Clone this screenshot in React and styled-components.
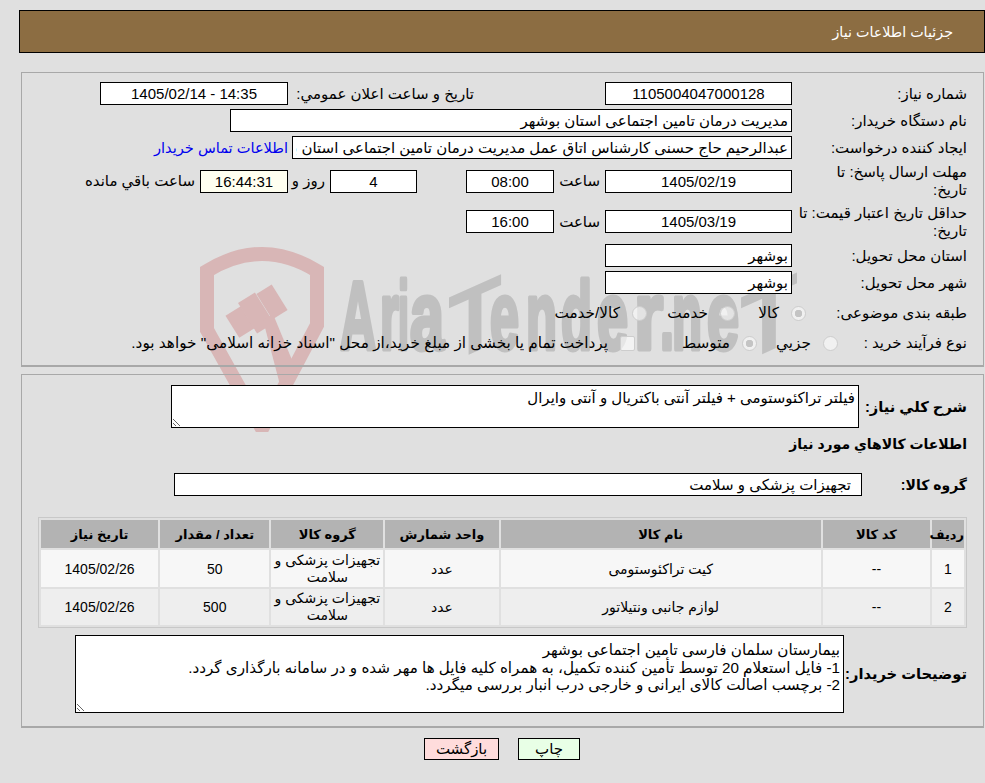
import React from "react";
import styled, { createGlobalStyle } from "styled-components";

const GlobalStyle = createGlobalStyle`
  html, body {
    margin: 0;
    padding: 0;
    background: #e0e0e0;
  }
  body {
    font-family: "Liberation Sans", "DejaVu Sans", sans-serif;
    font-size: 15px;
    color: #000;
  }
`;

const ITEMS = [
  { id: 1, code: "--", name: "کیت تراکئوستومی", unit: "عدد", group: "تجهیزات پزشکی و سلامت", qty: "50", date: "1405/02/26", height: 37 },
  { id: 2, code: "--", name: "لوازم جانبی ونتیلاتور", unit: "عدد", group: "تجهیزات پزشکی و سلامت", qty: "500", date: "1405/02/26", height: 36 },
];

const COLUMNS = [
  { title: "ردیف", width: 32 },
  { title: "کد کالا", width: 107 },
  { title: "نام کالا", width: 320 },
  { title: "واحد شمارش", width: 113 },
  { title: "گروه کالا", width: 112 },
  { title: "تعداد / مقدار", width: 109 },
  { title: "تاریخ نیاز", width: 117 },
];

const DESCRIPTION = `بیمارستان سلمان فارسی تامین اجتماعی بوشهر
1- فایل استعلام 20 توسط تأمین کننده تکمیل، به همراه کلیه فایل ها مهر شده و در سامانه بارگذاری گردد.
2- برچسب اصالت کالای ایرانی و خارجی درب انبار بررسی میگردد.`;

// the logo's letters are set one by one, the two T's lean upward
const LOGO_LETTERS = [
  { char: "A", x: 140, width: 36 },
  { char: "r", x: 180, width: 19 },
  { char: "i", x: 198, width: 11 },
  { char: "a", x: 210, width: 34 },
  { char: "T", x: 248, width: 54, lean: true },
  { char: "e", x: 290, width: 29 },
  { char: "n", x: 326, width: 31 },
  { char: "d", x: 361, width: 31 },
  { char: "e", x: 397, width: 31 },
  { char: "r", x: 434, width: 29 },
  { char: ".", x: 460, width: 14 },
  { char: "n", x: 472, width: 30 },
  { char: "e", x: 507, width: 32 },
  { char: "T", x: 540, width: 58, lean: true },
];

function Watermark() {
  return (
    <S.Watermark viewBox="0 0 640 190" width="640" height="190" aria-hidden="true">
      <path
        d="M7 26 Q62 -8 117 26 L117 80 L64 180 L60 180 L7 85 Z"
        fill="none"
        stroke="#d8b6b6"
        strokeWidth="14"
      />
      <g fill="#d8b6b6">
        <rect x="-9" y="-13" width="18" height="26" transform="translate(40 77) rotate(-32)" />
        <rect x="-10" y="-18" width="20" height="36" transform="translate(56 68) rotate(-32)" />
        <rect x="-9" y="-15" width="18" height="30" transform="translate(72 57) rotate(-32)" />
        <path d="M63 75 L73 69 L97 127 L80 140 Z" />
      </g>
      <g
        fill="#c0c0c0"
        stroke="#c0c0c0"
        strokeLinejoin="round"
        fontFamily="'Liberation Sans', sans-serif"
        fontWeight="700"
        fontSize="96"
        direction="ltr"
      >
        {LOGO_LETTERS.map((letter) => (
          <text
            key={letter.x}
            strokeWidth={letter.lean ? 0 : 5}
            transform={
              letter.lean
                ? `translate(${letter.x} 119) skewY(-24)`
                : `translate(${letter.x} 104)`
            }
            textLength={letter.width}
            lengthAdjust="spacingAndGlyphs"
          >
            {letter.char}
          </text>
        ))}
      </g>
    </S.Watermark>
  );
}

function Row({ height, labelWidth = 175, label, bold, size, children }) {
  return (
    <S.Row $height={height}>
      <S.Label $width={labelWidth} $bold={bold} $size={size}>{label}</S.Label>
      {children}
    </S.Row>
  );
}

function Option({ width, type = "radio", name, checked, children }) {
  return (
    <S.Option $width={width}>
      {type === "radio" ? <S.Radio name={name} defaultChecked={checked} /> : <S.Check />}
      <span>{children}</span>
    </S.Option>
  );
}

export default function App() {
  return (
    <S.Page>
      <GlobalStyle />
      <Watermark />

      <S.Header>جزئیات اطلاعات نیاز</S.Header>

      <S.Panel $top={19} $pad={7} $bottom={9}>
        <Row height={27} label="شماره نیاز:">
          <S.Field $width={187} readOnly value="1105004047000128" />
          <S.Caption $width={317} $inset={131}>تاریخ و ساعت اعلان عمومي:</S.Caption>
          <S.Field $width={188} readOnly value="14:35 - 1405/02/14" />
        </Row>
        <Row height={27} label="نام دستگاه خریدار:">
          <S.Field $width={562} $start readOnly value="مدیریت درمان تامین اجتماعی استان بوشهر" />
        </Row>
        <Row height={27} label="ایجاد کننده درخواست:">
          <S.Field $width={500} $start readOnly value="عبدالرحیم حاج حسنی کارشناس اتاق عمل مدیریت درمان تامین اجتماعی استان بوشهر" />
          <S.ContactLink href="#">اطلاعات تماس خریدار</S.ContactLink>
        </Row>
        <Row height={40} label={<>مهلت ارسال پاسخ: تا<br />تاریخ:</>}>
          <S.Field $width={187} readOnly value="1405/02/19" />
          <S.Caption $width={51} $inset={5}>ساعت</S.Caption>
          <S.Field $width={88} readOnly value="08:00" />
          <S.Caption $width={49} />
          <S.Field $width={87} readOnly value="4" />
          <S.Caption $width={42} $inset={5}>روز و</S.Caption>
          <S.Field $width={88} $tint readOnly value="16:44:31" />
          <S.Caption $inset={5}>ساعت باقي مانده</S.Caption>
        </Row>
        <Row height={41} label="حداقل تاریخ اعتبار قیمت: تا تاریخ:">
          <S.Field $width={187} readOnly value="1405/03/19" />
          <S.Caption $width={51} $inset={5}>ساعت</S.Caption>
          <S.Field $width={88} readOnly value="16:00" />
        </Row>
        <Row height={27} label="استان محل تحویل:">
          <S.Field $width={187} $start readOnly value="بوشهر" />
        </Row>
        <Row height={27} label="شهر محل تحویل:">
          <S.Field $width={187} $start readOnly value="بوشهر" />
        </Row>
        <Row height={34} labelWidth={161} label="طبقه بندی موضوعی:">
          <Option width={71} name="subject" checked>کالا</Option>
          <Option width={88} name="subject">خدمت</Option>
          <Option name="subject">کالا/خدمت</Option>
        </Row>
        <Row height={26} labelWidth={129} label="نوع فرآیند خرید :">
          <Option width={81} name="process">جزیي</Option>
          <Option width={122} name="process" checked>متوسط</Option>
          <Option type="check">پرداخت تمام یا بخشی از مبلغ خرید،از محل "اسناد خزانه اسلامی" خواهد بود.</Option>
        </Row>
      </S.Panel>

      <S.Panel $top={7} $pad={9} $bottom={13}>
        <Row height={45} labelWidth={108} bold size={14.7} label="شرح کلي نیاز:">
          <S.Notes $width={688} $height={43} $padTop={3} readOnly value="فیلتر تراکئوستومی + فیلتر آنتی باکتریال و آنتی وایرال" />
        </Row>
        <S.SectionTitle>اطلاعات کالاهاي مورد نیاز</S.SectionTitle>
        <Row height={25} labelWidth={105} bold label="گروه کالا:">
          <S.Field $width={688} $start $pad={10} readOnly value="تجهیزات پزشکی و سلامت" />
        </Row>

        <S.Table>
          <thead>
            <tr>
              {COLUMNS.map((col) => (
                <S.Th key={col.title} $width={col.width}>{col.title}</S.Th>
              ))}
            </tr>
          </thead>
          <tbody>
            {ITEMS.map((item) => (
              <S.Tr key={item.id} $even={item.id % 2 === 0} $height={item.height}>
                <td>{item.id}</td>
                <td>{item.code}</td>
                <td>{item.name}</td>
                <td>{item.unit}</td>
                <S.GroupCell>{item.group}</S.GroupCell>
                <td>{item.qty}</td>
                <td>{item.date}</td>
              </S.Tr>
            ))}
          </tbody>
        </S.Table>

        <S.DescriptionRow>
          <S.Label $width={123} $bold $size={14.7}>توضیحات خریدار:</S.Label>
          <S.Notes $width={769} $height={78} $padTop={5} $size={15.2} readOnly value={DESCRIPTION} />
        </S.DescriptionRow>
      </S.Panel>

      <S.Actions>
        <S.Button $bg="#e8ffe6" $width={62}>چاپ</S.Button>
        <S.Button $bg="#ffdcdc" $width={75}>بازگشت</S.Button>
      </S.Actions>
    </S.Page>
  );
}

const S = {
  Page: styled.div`
    position: relative;
    width: 985px;
    height: 783px;
    box-sizing: border-box;
    padding: 10px 0 0 19px;
    direction: rtl;
    overflow: hidden;
    background: #e0e0e0;
  `,
  Watermark: styled.svg`
    position: absolute;
    left: 200px;
    top: 245px;
    overflow: visible;
  `,
  Header: styled.div`
    position: relative;
    height: 43px;
    box-sizing: border-box;
    display: flex;
    align-items: center;
    padding-right: 31px;
    border: 1px solid #000;
    background: #8c6d42;
    color: #fff;
    font-size: 14.3px;
  `,
  Panel: styled.section`
    position: relative;
    margin: ${({ $top }) => $top}px 1px 0 2px;
    padding: ${({ $pad }) => $pad}px 16px ${({ $bottom }) => $bottom}px;
    border: 1px solid #a8a8a8;
    border-bottom-width: 2px;
  `,
  Row: styled.div`
    display: flex;
    align-items: center;
    height: ${({ $height }) => $height}px;
  `,
  Label: styled.div`
    flex: none;
    box-sizing: border-box;
    width: ${({ $width }) => $width}px;
    line-height: 18px;
    font-size: ${({ $bold, $size }) => $size || ($bold ? 14 : 15)}px;
    font-weight: ${({ $bold }) => ($bold ? 700 : 400)};
    white-space: ${({ $bold }) => ($bold ? "nowrap" : "normal")};
  `,
  Caption: styled.div`
    flex: none;
    box-sizing: border-box;
    width: ${({ $width }) => ($width ? `${$width}px` : "auto")};
    padding-right: ${({ $inset }) => $inset || 0}px;
    white-space: nowrap;
  `,
  Field: styled.input`
    flex: none;
    box-sizing: border-box;
    width: ${({ $width }) => $width}px;
    height: 23px;
    margin: 0;
    padding: 0 ${({ $pad }) => $pad || 3}px;
    border: 1px solid #000;
    border-radius: 0;
    outline: none;
    background: ${({ $tint }) => ($tint ? "#fffff0" : "#fff")};
    font: inherit;
    font-size: 15px;
    color: #000;
    text-align: ${({ $start }) => ($start ? "right" : "center")};
  `,
  ContactLink: styled.a`
    margin-right: 4px;
    color: #0000ee;
    font-size: 14.6px;
    text-decoration: none;
    white-space: nowrap;
  `,
  Option: styled.label`
    flex: none;
    display: flex;
    align-items: center;
    gap: 12px;
    width: ${({ $width }) => ($width ? `${$width}px` : "auto")};
    font-size: 15.3px;
    white-space: nowrap;
  `,
  Radio: styled.input.attrs({ type: "radio" })`
    appearance: none;
    flex: none;
    box-sizing: border-box;
    width: 15px;
    height: 15px;
    margin: 0;
    border: 1px solid #cdcdcd;
    border-radius: 50%;
    background: rgba(255, 255, 255, 0.55);
    &:checked {
      background: radial-gradient(circle, #c4c4c4 0 3.5px, #f0f0f0 4px);
    }
  `,
  Check: styled.input.attrs({ type: "checkbox" })`
    appearance: none;
    flex: none;
    box-sizing: border-box;
    width: 15px;
    height: 15px;
    margin: 0;
    border: 1px solid #cdcdcd;
    border-radius: 2px;
    background: rgba(255, 255, 255, 0.6);
  `,
  Notes: styled.textarea`
    flex: none;
    display: block;
    box-sizing: border-box;
    width: ${({ $width }) => $width}px;
    height: ${({ $height }) => $height}px;
    margin: 0;
    padding: ${({ $padTop }) => $padTop}px 3px 2px;
    border: 1px solid #000;
    border-radius: 0;
    outline: none;
    background: #fff;
    font: inherit;
    font-size: ${({ $size }) => $size || 15}px;
    line-height: 17.5px;
    color: #000;
  `,
  SectionTitle: styled.h3`
    margin: 0;
    padding-top: 4px;
    height: 43px;
    box-sizing: border-box;
    font-size: 14px;
    font-weight: 700;
    line-height: 22px;
  `,
  Table: styled.table`
    width: 929px;
    margin-top: 20px;
    table-layout: fixed;
    border: 1px solid #c8c8c8;
    border-collapse: separate;
    border-spacing: 2px;
    font-size: 14px;
    text-align: center;
    td {
      padding: 0;
    }
  `,
  Th: styled.th`
    width: ${({ $width }) => $width}px;
    height: 28px;
    padding: 0;
    background: #b3b3b3;
    font-size: 13px;
    font-weight: 700;
  `,
  Tr: styled.tr`
    height: ${({ $height }) => $height}px;
    background: ${({ $even }) => ($even ? "#eeeeee" : "#f7f7f7")};
  `,
  GroupCell: styled.td`
    line-height: 17px;
  `,
  DescriptionRow: styled.div`
    display: flex;
    align-items: center;
    margin-top: 7px;
  `,
  Actions: styled.div`
    display: flex;
    justify-content: center;
    gap: 19px;
    margin-top: 10px;
  `,
  Button: styled.button`
    position: relative;
    width: ${({ $width }) => $width}px;
    height: 22px;
    padding: 0;
    border: 1px solid #000;
    border-radius: 0;
    background: ${({ $bg }) => $bg};
    font: inherit;
    font-size: 15px;
    color: #000;
  `,
};
